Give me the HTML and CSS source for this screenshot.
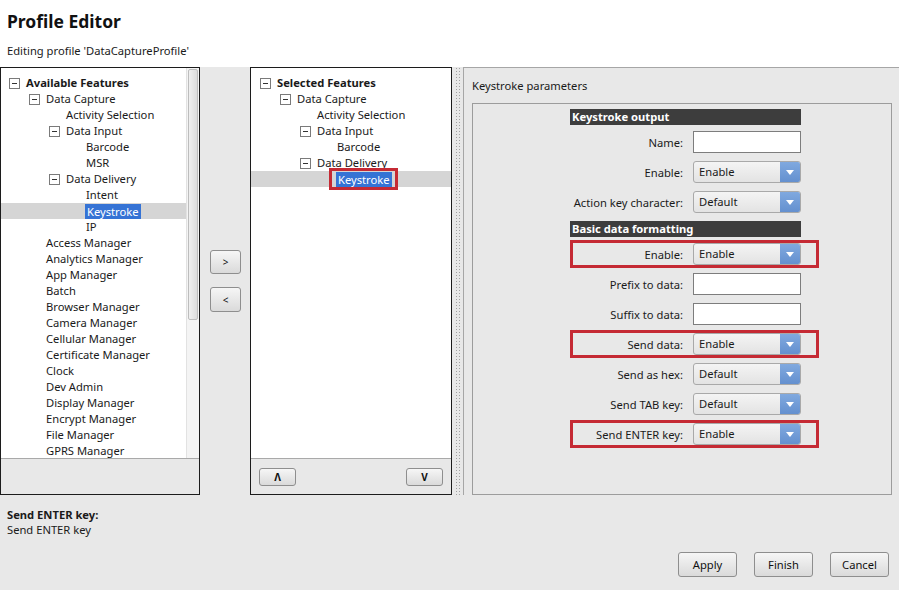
FILE: index.html
```html
<!DOCTYPE html>
<html lang="en">
<head>
<meta charset="utf-8">
<title>Profile Editor</title>
<link rel="stylesheet" href="styles.css">
</head>
<body>
<header class="top">
  <h1 class="title">Profile Editor</h1>
  <div class="subtitle">Editing profile 'DataCaptureProfile'</div>
</header>

<div class="main">
  <section class="panel panel-left">
    <div class="list">
      <div class="tree">
        <div class="node l0"><span class="tog minus"></span><b>Available Features</b></div>
        <div class="node l1"><span class="tog minus"></span>Data Capture</div>
        <div class="node l2"><span class="tog"></span>Activity Selection</div>
        <div class="node l2"><span class="tog minus"></span>Data Input</div>
        <div class="node l3"><span class="tog"></span>Barcode</div>
        <div class="node l3"><span class="tog"></span>MSR</div>
        <div class="node l2"><span class="tog minus"></span>Data Delivery</div>
        <div class="node l3"><span class="tog"></span>Intent</div>
        <div class="node l3 sel"><span class="tog"></span><span class="hl">Keystroke</span></div>
        <div class="node l3"><span class="tog"></span>IP</div>
        <div class="node l1"><span class="tog"></span>Access Manager</div>
        <div class="node l1"><span class="tog"></span>Analytics Manager</div>
        <div class="node l1"><span class="tog"></span>App Manager</div>
        <div class="node l1"><span class="tog"></span>Batch</div>
        <div class="node l1"><span class="tog"></span>Browser Manager</div>
        <div class="node l1"><span class="tog"></span>Camera Manager</div>
        <div class="node l1"><span class="tog"></span>Cellular Manager</div>
        <div class="node l1"><span class="tog"></span>Certificate Manager</div>
        <div class="node l1"><span class="tog"></span>Clock</div>
        <div class="node l1"><span class="tog"></span>Dev Admin</div>
        <div class="node l1"><span class="tog"></span>Display Manager</div>
        <div class="node l1"><span class="tog"></span>Encrypt Manager</div>
        <div class="node l1"><span class="tog"></span>File Manager</div>
        <div class="node l1"><span class="tog"></span>GPRS Manager</div>
      </div>
      <div class="scrollbar"><div class="thumb"></div></div>
    </div>
    <div class="panel-foot"></div>
  </section>

  <div class="movers">
    <button class="btn mover mover-add">&gt;</button>
    <button class="btn mover mover-remove">&lt;</button>
  </div>

  <section class="panel panel-mid">
    <div class="list">
      <div class="tree">
        <div class="node l0"><span class="tog minus"></span><b>Selected Features</b></div>
        <div class="node l1"><span class="tog minus"></span>Data Capture</div>
        <div class="node l2"><span class="tog"></span>Activity Selection</div>
        <div class="node l2"><span class="tog minus"></span>Data Input</div>
        <div class="node l3"><span class="tog"></span>Barcode</div>
        <div class="node l2"><span class="tog minus"></span>Data Delivery</div>
        <div class="node l3 sel"><span class="tog"></span><span class="hl boxed">Keystroke</span></div>
      </div>
    </div>
    <div class="panel-foot">
      <button class="btn order">&Lambda;</button>
      <button class="btn order">V</button>
    </div>
  </section>

  <div class="splitter"><div class="dots"></div></div>

  <section class="params">
    <div class="params-title">Keystroke parameters</div>
    <div class="params-box">
      <div class="form">
        <div class="sect">Keystroke output</div>
        <div class="row"><label>Name:</label><span class="input"></span></div>
        <div class="row"><label>Enable:</label><span class="select"><span class="val">Enable</span><span class="arrow"></span></span></div>
        <div class="row"><label>Action key character:</label><span class="select"><span class="val">Default</span><span class="arrow"></span></span></div>

        <div class="sect sect-2">Basic data formatting</div>
        <div class="row mark"><label>Enable:</label><span class="select"><span class="val">Enable</span><span class="arrow"></span></span></div>
        <div class="row"><label>Prefix to data:</label><span class="input"></span></div>
        <div class="row"><label>Suffix to data:</label><span class="input"></span></div>
        <div class="row mark"><label>Send data:</label><span class="select"><span class="val">Enable</span><span class="arrow"></span></span></div>
        <div class="row"><label>Send as hex:</label><span class="select"><span class="val">Default</span><span class="arrow"></span></span></div>
        <div class="row"><label>Send TAB key:</label><span class="select"><span class="val">Default</span><span class="arrow"></span></span></div>
        <div class="row mark"><label>Send ENTER key:</label><span class="select"><span class="val">Enable</span><span class="arrow"></span></span></div>
      </div>
    </div>
  </section>
</div>

<div class="help">
  <div class="help-title">Send ENTER key:</div>
  <div class="help-text">Send ENTER key</div>
</div>

<div class="actions">
  <button class="btn action">Apply</button>
  <button class="btn action">Finish</button>
  <button class="btn action">Cancel</button>
</div>
</body>
</html>
```

FILE: styles.css
```css
* { box-sizing: border-box; }

html, body { margin: 0; padding: 0; }

body {
  width: 899px;
  height: 590px;
  overflow: hidden;
  background: #e8e8e8;
  font-family: "Noto Sans", "Open Sans", sans-serif;
  font-size: 11.2px;
  color: #1a1a1a;
}

/* Header */
.top {
  height: 67px;
  background: #fff;
  padding: 10px 7px 0;
}
.title {
  margin: 0;
  font-size: 17.5px;
  font-weight: 700;
  line-height: 22px;
  color: #111;
}
.subtitle {
  margin-top: 11px;
  line-height: 16px;
}

/* Main area */
.main {
  display: flex;
  height: 428px;
}

.panel {
  display: flex;
  flex-direction: column;
  border: 1px solid #1c1c1c;
  background: #e8e8e8;
}
.panel-left { width: 200px; }
.panel-mid { width: 202px; }

.list {
  flex: 1;
  min-height: 0;
  display: flex;
  background: #fff;
  overflow: hidden;
}
.tree {
  flex: 1;
  padding-top: 7px;
  overflow: hidden;
}
.panel-mid .tree { padding-left: 1px; }

.node {
  display: flex;
  align-items: center;
  height: 16px;
  line-height: 16px;
  white-space: nowrap;
}
.node b { font-weight: 700; }
.node.sel { background: #d5d5d5; }
.panel-mid .node.sel { margin-left: -1px; padding-left: 69px; }

.l0 { padding-left: 8px; }
.l1 { padding-left: 28px; }
.l2 { padding-left: 48px; }
.l3 { padding-left: 68px; }

.tog {
  width: 17px;
  flex: none;
  display: flex;
  align-items: center;
}
.tog.minus::before {
  content: "";
  display: block;
  width: 9px;
  height: 9px;
  border: 1px solid #7a7a7a;
  background: linear-gradient(#333, #333) center / 5px 1px no-repeat, #fff;
}

.hl {
  display: inline-block;
  position: relative;
  background: #3573d5;
  color: #fff;
  line-height: 15px;
  padding: 0 2px;
  margin-left: -1px;
}
.hl.boxed::after {
  content: "";
  position: absolute;
  top: -4px;
  bottom: -3px;
  left: -7px;
  right: -6px;
  border: 3px solid #c52a34;
}

.scrollbar {
  width: 13px;
  flex: none;
  background: #f4f4f4;
  border-left: 1px solid #e2e2e2;
  padding: 1px 1px;
}
.thumb {
  height: 251px;
  border: 1px solid #bdbdbd;
  border-radius: 2px;
  background: linear-gradient(90deg, #f0f0f0, #dcdcdc);
}

.panel-foot {
  height: 36px;
  flex: none;
  border-top: 1px solid #a9a9a9;
  display: flex;
  justify-content: space-between;
  align-items: flex-start;
  padding: 9px 8px 0 8px;
}

/* Buttons */
.btn {
  font-family: inherit;
  font-size: 11.2px;
  color: #111;
  border: 1px solid #8e8e8e;
  border-radius: 3px;
  background: linear-gradient(#f6f6f6, #dadada);
  padding: 0;
}
.mover {
  width: 31px;
  height: 24px;
  font-size: 10px;
}
.mover-remove { height: 25px; }
.order {
  width: 37px;
  height: 18px;
  font-size: 10px;
  font-weight: 700;
}

.movers {
  width: 50px;
  flex: none;
  display: flex;
  flex-direction: column;
  align-items: flex-start;
  gap: 13px;
  padding: 183px 0 0 10px;
}

.splitter {
  width: 11px;
  flex: none;
  padding: 0 1px 0 3px;
}
.dots {
  height: 100%;
  background-image: radial-gradient(circle, #a2a2a2 0.7px, transparent 1px);
  background-size: 3px 3px;
}

/* Params */
.params {
  flex: 1;
  display: flex;
  flex-direction: column;
  border-top: 1px solid #a6a6a6;
  border-left: 1px solid #a6a6a6;
  padding: 0 7px 0 8px;
}
.params-title {
  padding: 10px 0 9px;
  line-height: 16px;
}
.params-box {
  flex: 1;
  border: 1px solid #9c9c9c;
  padding: 5px 0 0 97px;
}
.form { width: 231px; }

.sect {
  height: 16px;
  line-height: 16px;
  background: #3d3d3d;
  color: #fff;
  font-weight: 700;
  padding-left: 2px;
  margin-bottom: 2px;
}
.sect-2 { margin-top: 4px; }

.row {
  position: relative;
  display: grid;
  grid-template-columns: 113px 108px;
  column-gap: 10px;
  align-items: center;
  height: 30px;
}
.row label { text-align: right; white-space: nowrap; }

.input {
  height: 22px;
  background: #fff;
  border: 1px solid #7d7d7d;
}
.select {
  height: 22px;
  display: flex;
  border: 1px solid #a9a9a9;
  border-radius: 3px;
  background: linear-gradient(#f4f4f4, #e3e3e3);
  overflow: hidden;
}
.select .val {
  flex: 1;
  padding-left: 5px;
  line-height: 20px;
}
.select .arrow {
  width: 20px;
  flex: none;
  display: flex;
  align-items: center;
  justify-content: center;
  background: linear-gradient(#80a9df, #6490cf);
}
.select .arrow::before {
  content: "";
  border-left: 4px solid transparent;
  border-right: 4px solid transparent;
  border-top: 5px solid #fff;
}

.row.mark::after {
  content: "";
  position: absolute;
  left: 0;
  right: -18px;
  top: 1px;
  bottom: 1px;
  border: 3px solid #c52a34;
}

/* Bottom */
.help {
  height: 50px;
  padding: 12px 7px 0;
  line-height: 15px;
}
.help-title { font-weight: 700; }

.actions {
  display: flex;
  justify-content: flex-end;
  gap: 17px;
  padding: 7px 10px 0;
}
.action {
  width: 59px;
  height: 25px;
}
```
